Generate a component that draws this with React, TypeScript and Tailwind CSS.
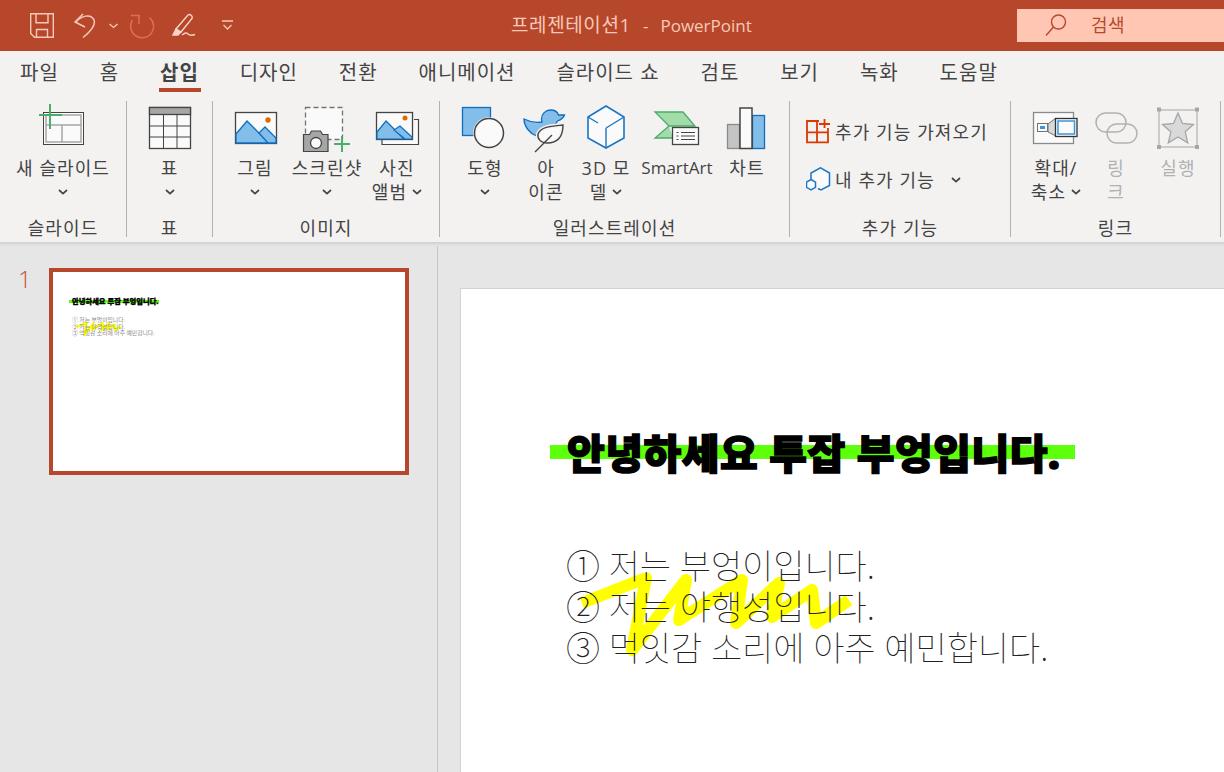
import type { ReactNode } from 'react';

const tabs = ['파일', '홈', '삽입', '디자인', '전환', '애니메이션', '슬라이드 쇼', '검토', '보기', '녹화', '도움말'];

const DARK = '#444444';
const BLUE = '#83bdea';
const DEEP = '#106ebe';
const GREEN = '#4aae6a';

function Chevron({ className = '' }: { className?: string }) {
  return (
    <svg width="10" height="6" viewBox="0 0 10 6" className={className} fill="none" stroke="#444" strokeWidth="1.7">
      <path d="M1 1l4 3.6L9 1" />
    </svg>
  );
}

function Icon({ children }: { children: ReactNode }) {
  return (
    <svg width="60" height="55" viewBox="0 0 60 55" fill="none" className="shrink-0">
      {children}
    </svg>
  );
}

function RibbonButton({
  icon,
  lines,
  width,
  chevronBelow,
  chevronInline,
  disabled,
  latin,
}: {
  icon: ReactNode;
  lines: string[];
  width: string;
  chevronBelow?: boolean;
  chevronInline?: boolean;
  disabled?: boolean;
  latin?: boolean;
}) {
  return (
    <div className={`flex flex-col items-center ${width} ${disabled ? 'text-[#b1b1b1]' : 'text-[#444444]'}`}>
      <Icon>{icon}</Icon>
      {lines.map((line, i) => (
        <div
          key={line}
          className={`flex items-center gap-[5px] h-[24px] leading-[24px] whitespace-nowrap ${latin ? 'text-[17px] tracking-normal' : ''}`}
        >
          <span>{line}</span>
          {chevronInline && i === lines.length - 1 && <Chevron />}
        </div>
      ))}
      {chevronBelow && (
        <div className="h-[24px] flex items-center">
          <Chevron />
        </div>
      )}
    </div>
  );
}

function Group({ width, label, children, className = '' }: { width: string; label: string; children: ReactNode; className?: string }) {
  return (
    <div className={`${width} shrink-0 h-[136px] flex flex-col border-r border-[#b3b0ad]`}>
      <div className={`flex-1 flex ${className}`}>{children}</div>
      <div className="h-[18px] leading-[18px] text-center text-[#444444] whitespace-nowrap">{label}</div>
    </div>
  );
}

function Scribble({ strokeWidth = 12 }: { strokeWidth?: number }) {
  return (
    <svg viewBox="0 0 280 84" className="w-full h-full" fill="none">
      <path
        d="M5 30L69 5L55 77L109 7L102 47L165 7L159 50L202 10L195 44L235 17L239 50L272 27"
        stroke="#ffff00"
        strokeWidth={strokeWidth}
        strokeLinejoin="round"
        strokeLinecap="butt"
      />
    </svg>
  );
}

export default function App() {
  return (
    <div className="w-[1224px] h-[772px] overflow-hidden bg-[#e6e6e6] font-['Open_Sans','Noto_Sans_CJK_KR',sans-serif]">
      {/* Title bar */}
      <header className="h-[51px] bg-[#b7472a] flex items-center">
        <div className="w-[511px] shrink-0 flex items-center pl-[30px]">
          <svg width="24" height="25" viewBox="0 0 24 25" fill="none" stroke="#f7c9ba" strokeWidth="1.4">
            <path d="M.7.7h22.600v23.600H4.500L.7 20.500z" />
            <path d="M6 .7v9h12V.7M6.500 24v-7.500h11V24" />
          </svg>
          <svg width="24" height="26" viewBox="0 0 24 26" fill="none" stroke="#f7c9ba" strokeWidth="1.5" className="ml-[19px]">
            <path d="M10 1L2 9l10 5" />
            <path d="M3 9C8 3 18 0 21 7c2 5-3 11-11 17.500" />
          </svg>
          <svg width="9" height="6" viewBox="0 0 9 6" fill="none" stroke="#f7c9ba" strokeWidth="1.3" className="ml-[12px]">
            <path d="M.5 1l4 3.500L8.500 1" />
          </svg>
          <svg width="26" height="26" viewBox="0 0 26 26" fill="none" stroke="#dd6f55" strokeWidth="1.5" className="ml-[11px]">
            <path d="M20.500 4.500A11.500 11.500 0 1 1 3.500 7" />
            <path d="M2 2.500h8V11" />
          </svg>
          <svg width="25" height="25" viewBox="0 0 25 25" fill="none" stroke="#f9d5c9" strokeWidth="1.4" className="ml-[17px]">
            <path d="M4 16L16 2c2-1.500 5 1 4 3.500L9 19l-4.500 1z" />
            <path d="M1 22l3-6 5 3-3 3z" fill="#f9d5c9" />
            <path d="M10 22c3-2 4-3 6-1 1.500 1.500 4 1.500 7 .5" />
          </svg>
          <svg width="11" height="11" viewBox="0 0 11 11" fill="none" stroke="#f7c9ba" strokeWidth="1.3" className="ml-[25px]">
            <path d="M0 1h11M1.500 5l4 4 4-4" />
          </svg>
        </div>
        <div className="flex-1 flex items-baseline text-[17px] text-[#f7c9ba] whitespace-nowrap">
          <span className="text-[19px] tracking-[0.6px]">프레젠테이션1</span>
          <span className="ml-[12px]">-</span>
          <span className="ml-[12px]">PowerPoint</span>
        </div>
        <div className="w-[207px] h-[33px] mb-[1px] bg-[#ffc7b3] flex items-center shrink-0">
          <svg width="22" height="23" viewBox="0 0 22 23" fill="none" stroke="#b7472a" strokeWidth="1.4" className="ml-[28px]">
            <circle cx="13.500" cy="8" r="7" />
            <path d="M8.500 13L1 21.500" />
          </svg>
          <span className="ml-[24px] text-[18px] tracking-[0.5px] text-[#b7472a]">검색</span>
        </div>
      </header>

      {/* Tabs */}
      <nav className="h-[45px] bg-[#f3f2f1] flex pl-[20px] gap-[40.900px] text-[20px] tracking-[1px] text-[#444444]">
        {tabs.map((tab) => (
          <div key={tab} className="relative pt-[8px] leading-[27px] whitespace-nowrap">
            <span className={tab === '삽입' ? 'font-bold' : ''}>{tab}</span>
            {tab === '삽입' && <div className="absolute left-[-1px] right-[-2px] top-[37px] h-[4px] bg-[#b7472a]" />}
          </div>
        ))}
      </nav>

      {/* Ribbon */}
      <section className="h-[146px] bg-[#f3f2f1] flex pt-[5px] text-[18px] tracking-[1.100px]">
        <Group width="w-[127px]" label="슬라이드" className="justify-center">
          <RibbonButton
            width="w-[126px]"
            chevronBelow
            lines={['새 슬라이드']}
            icon={
              <>
                <rect x="10.500" y="11.500" width="40" height="32" fill="#fafafa" stroke={DARK} />
                <path d="M13 41V14h35v27zM13 24h35M29 24v17" stroke="#a6a6a6" strokeWidth="1.500" />
                <path d="M17 3v25M6 14h23" stroke={GREEN} strokeWidth="2" />
              </>
            }
          />
        </Group>

        <Group width="w-[86px]" label="표" className="justify-center">
          <RibbonButton
            width="w-[80px]"
            chevronBelow
            lines={['표']}
            icon={
              <>
                <rect x="9.500" y="6.500" width="41" height="41" fill="#fafafa" stroke={DARK} strokeWidth="1.300" />
                <rect x="9.500" y="6.500" width="41" height="7" fill="#a6a6a6" stroke={DARK} strokeWidth="1.300" />
                <path d="M23.500 13v34M37 13v34M10 25h40M10 36h40" stroke={DARK} strokeWidth="1" />
              </>
            }
          />
        </Group>

        <Group width="w-[227px]" label="이미지" className="pl-[6px]">
          <RibbonButton
            width="w-[72px]"
            chevronBelow
            lines={['그림']}
            icon={
              <>
                <rect x="10.500" y="11.500" width="41" height="31" fill="#fafafa" stroke={DARK} strokeWidth="1.300" />
                <path d="M11 33L22 20l22 22H11z" fill={BLUE} stroke={DEEP} strokeWidth="1.300" />
                <path d="M34 32l6-6 11 11v5h-8z" fill={BLUE} stroke={DEEP} strokeWidth="1.300" />
                <circle cx="43" cy="19" r="2.700" fill="#e06c00" />
              </>
            }
          />
          <RibbonButton
            width="w-[72px]"
            chevronBelow
            lines={['스크린샷']}
            icon={
              <>
                <rect x="8.500" y="6.500" width="37" height="32" fill="#fafafa" stroke="#737373" strokeWidth="1.300" strokeDasharray="5 3" />
                <path d="M6.500 33.500h6l2-3.500h9l2 3.500h5.500v17h-24.500z" fill="#a6a6a6" stroke={DARK} strokeWidth="1.200" />
                <circle cx="19" cy="42" r="5.500" fill="#fafafa" stroke={DARK} strokeWidth="1.300" />
                <path d="M45 35v16M37 43h16" stroke={GREEN} strokeWidth="2" />
              </>
            }
          />
          <RibbonButton
            width="w-[68px]"
            chevronInline
            lines={['사진', '앨범']}
            icon={
              <>
                <path d="M47 18.500h4.500v25H15v-5" fill="#fafafa" stroke={DARK} strokeWidth="1.200" />
                <rect x="9.500" y="11.500" width="36" height="27" fill="#fafafa" stroke={DARK} strokeWidth="1.300" />
                <path d="M10 31l9-11 18 18H10z" fill={BLUE} stroke={DEEP} strokeWidth="1.200" />
                <path d="M27 29l6-4 12 11v2h-7z" fill={BLUE} stroke={DEEP} strokeWidth="1.200" />
                <circle cx="38" cy="17" r="2.500" fill="#e06c00" />
              </>
            }
          />
        </Group>

        <Group width="w-[350px]" label="일러스트레이션" className="pl-[14px]">
          <RibbonButton
            width="w-[62px]"
            chevronBelow
            lines={['도형']}
            icon={
              <>
                <rect x="7.500" y="6.500" width="28" height="28" fill={BLUE} stroke={DEEP} strokeWidth="1.300" />
                <circle cx="34" cy="32" r="15.800" fill="#f3f2f1" />
                <circle cx="34" cy="32" r="14.500" fill="#fafafa" stroke={DARK} strokeWidth="1.500" />
              </>
            }
          />
          <RibbonButton
            width="w-[60px]"
            lines={['아', '이콘']}
            icon={
              <>
                <path
                  d="M8 18c6 3 12 4 18 3 0-1-.5-2-.5-3 0-5 4-9 9-9 4 0 7 2 8 5h6c-1 3-4 5-7 6l-3 5-12 5-6 5C13 32 8 25 8 18z"
                  fill={BLUE}
                  stroke={DEEP}
                  strokeWidth="1.300"
                />
                <path d="M47 24c-10 1-22 1-25 9-1 5 3 9 9 9 10 0 16-5 16-18z" fill="#fafafa" stroke="#f3f2f1" strokeWidth="4" />
                <path d="M47 24c-10 1-22 1-25 9-1 5 3 9 9 9 10 0 16-5 16-18zM19 51l17-17" stroke={DARK} strokeWidth="1.400" />
              </>
            }
          />
          <RibbonButton
            width="w-[60px]"
            chevronInline
            lines={['3D 모', '델']}
            icon={
              <>
                <path d="M30 5l18 11v21L30 47 12 37V16z" fill="#fafafa" stroke="#1b76c4" strokeWidth="1.600" />
                <path d="M12 16l10 6M30 27l18-11M30 27v20" stroke="#1b76c4" strokeWidth="1.400" />
              </>
            }
          />
          <RibbonButton
            width="w-[82px]"
            latin
            lines={['SmartArt']}
            icon={
              <>
                <path d="M8 11h28l12 14H22zM22 25L8 37h18" fill="#a3dba9" stroke={GREEN} strokeWidth="1.300" />
                <rect x="25.500" y="26.500" width="26" height="17" fill="#fafafa" stroke={DARK} strokeWidth="1.300" />
                <path d="M34 31.500h14M34 35h14M34 38.500h14M29.500 31.500h2M29.500 35h2M29.500 38.500h2" stroke={DARK} />
              </>
            }
          />
          <RibbonButton
            width="w-[58px]"
            lines={['차트']}
            icon={
              <>
                <rect x="10.500" y="23.500" width="12" height="24" fill="#c4c4c4" stroke="#8a8a8a" strokeWidth="1.300" />
                <rect x="35.500" y="14.500" width="12" height="33" fill={BLUE} stroke={DEEP} strokeWidth="1.300" />
                <rect x="23" y="7" width="12" height="40.500" fill="#fafafa" stroke={DARK} strokeWidth="1.500" />
              </>
            }
          />
        </Group>

        <Group width="w-[221px]" label="추가 기능" className="flex-col pl-[16px] pt-[18px] gap-[22px]">
          <div className="flex items-center h-[26px] text-[#444444] whitespace-nowrap">
            <svg width="26" height="26" viewBox="0 0 26 26" fill="none" stroke="#d83b01" strokeWidth="1.800">
              <path d="M1 2h10v11.300H1zM11 13.300h11v10H11zM1 13.300h10v10H1zM22 9v4.300M11 2h2" />
              <path d="M18.500 0v9M13 5h11" />
            </svg>
            <span className="ml-[3px]">추가 기능 가져오기</span>
          </div>
          <div className="flex items-center h-[26px] text-[#444444] whitespace-nowrap">
            <svg width="26" height="26" viewBox="0 0 26 26" fill="none" stroke="#1b76c4" strokeWidth="1.500">
              <path d="M5 13V6L14.500.8 23.500 6v12.500L15 23l-3-1.500" fill="#fafafa" />
              <path d="M5 12.500l4.500 2.600v5.200L5 23 .5 20.300v-5.200z" fill="#fafafa" />
            </svg>
            <span className="ml-[3px]">내 추가 기능</span>
            <Chevron className="ml-[16px]" />
          </div>
        </Group>

        <Group width="w-[210px]" label="링크" className="pl-[15px]">
          <RibbonButton
            width="w-[60px]"
            chevronInline
            lines={['확대/', '축소']}
            icon={
              <>
                <rect x="7.500" y="11.500" width="40" height="31" fill="#fafafa" stroke="#8a8a8a" strokeWidth="1.300" />
                <path d="M22 23l8-6v18l-8-4z" fill="#d9d9d9" stroke="#737373" />
                <rect x="11.500" y="22.500" width="10" height="8" fill="#fafafa" stroke="#737373" />
                <rect x="14" y="25" width="5" height="3" fill="#3a96dd" />
                <rect x="29.500" y="17.500" width="21.500" height="18" fill="#fafafa" stroke="#333" strokeWidth="1.300" />
                <rect x="32" y="20" width="16.500" height="13" fill="#fafafa" stroke="#3a96dd" strokeWidth="1.500" />
              </>
            }
          />
          <RibbonButton
            width="w-[60px]"
            disabled
            lines={['링', '크']}
            icon={
              <g stroke="#b1b1b1" strokeWidth="1.500">
                <rect x="10" y="12" width="30" height="19" rx="9.500" />
                <rect x="21" y="23" width="30" height="19" rx="9.500" />
              </g>
            }
          />
          <RibbonButton
            width="w-[64px]"
            disabled
            lines={['실행']}
            icon={
              <>
                <rect x="11" y="9" width="38" height="37" stroke="#b1b1b1" strokeWidth="1.200" />
                <path d="M9 6.500h4v4H9zM47 6.500h4v4h-4zM9 44h4v4H9zM47 44h4v4h-4z" fill="#a6a6a6" />
                <path d="M30 12l4.500 10.500 11 1-8.300 7.300 2.500 11L30 36l-9.700 5.800 2.500-11-8.300-7.300 11-1z" fill="#d9d9d9" stroke="#a6a6a6" strokeWidth="1.300" />
              </>
            }
          />
        </Group>
      </section>
      <div className="h-[4px] bg-gradient-to-b from-[#d0d0d0] to-[#e6e6e6]" />

      {/* Work area */}
      <main className="h-[526px] flex">
        <aside className="w-[438px] shrink-0 border-r border-[#c6c6c6] flex pl-[18px] pt-[22px]">
          <div className="w-[31px] text-[24px] leading-[22px] font-light text-[#c8502f]">1</div>
          <div className="relative w-[360px] h-[207px] bg-white border-[4px] border-[#b7472a]">
            <div className="absolute left-[16px] top-[28px] w-[90px] h-[3px] bg-[#5dff0a]" />
            <div className="absolute left-[19px] top-[24px] text-[7.300px] leading-[10px] font-black text-black whitespace-nowrap [-webkit-text-stroke:0.3px_black]">
              안녕하세요 투잡 부엉입니다.
            </div>
            <div className="absolute left-[22px] top-[50px] w-[47px] h-[14px]">
              <Scribble strokeWidth={14} />
            </div>
            <div className="absolute left-[19px] top-[45px] text-[5.800px] leading-[6.700px] text-[#8a8a8a] whitespace-nowrap">
              <div>① 저는 부엉이입니다.</div>
              <div>② 저는 야행성입니다.</div>
              <div>③ 먹잇감 소리에 아주 예민합니다.</div>
            </div>
          </div>
        </aside>
        <div className="flex-1 pl-[22px] pt-[42px]">
          <div className="relative w-[900px] h-[600px] bg-white border border-[#d2d2d2]">
            <div className="absolute left-[89px] top-[156px] w-[525px] h-[14px] bg-[#5dff0a]" />
            <div className="absolute left-[106px] top-[139px] text-[41px] leading-[50px] tracking-[0.5px] font-black text-black whitespace-nowrap [-webkit-text-stroke:1.5px_black]">
              안녕하세요 투잡 부엉입니다.
            </div>
            <div className="absolute left-[116px] top-[284px] w-[280px] h-[84px]">
              <Scribble />
            </div>
            <div className="absolute left-[105px] top-[257px] text-[34px] leading-[41px] tracking-[-0.1px] font-thin text-[#222222] whitespace-nowrap">
              <div>① 저는 부엉이입니다.</div>
              <div>② 저는 야행성입니다.</div>
              <div>③ 먹잇감 소리에 아주 예민합니다.</div>
            </div>
          </div>
        </div>
      </main>
    </div>
  );
}
